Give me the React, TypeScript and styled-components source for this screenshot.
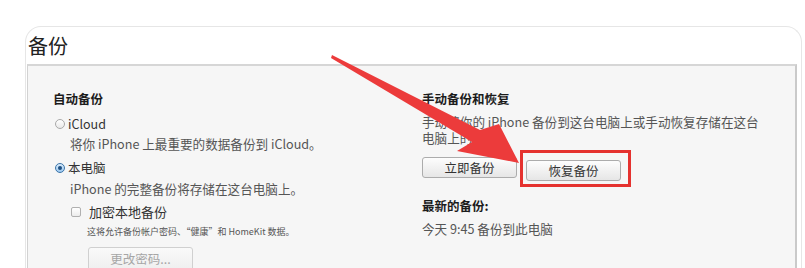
import styled, { createGlobalStyle, css } from 'styled-components';

const GlobalStyle = createGlobalStyle`
  html, body {
    margin: 0;
    padding: 0;
    background: #fff;
  }
  body {
    font-family: "Noto Sans CJK SC", "Noto Sans", sans-serif;
    color: #333;
  }
`;

const Page = styled.div`
  position: relative;
  width: 805px;
  height: 268px;
  overflow: hidden;
  padding: 26px 3px 0 25px;
  box-sizing: border-box;
`;

const Card = styled.section`
  border: 1px solid #e6e6e6;
  border-bottom: none;
  border-radius: 16px 16px 0 0;
  padding-top: 6px;
  min-height: 320px;
  background: #fff;
`;

const Title = styled.h1`
  margin: 0 0 5px 2px;
  font-size: 20px;
  line-height: 26px;
  font-weight: 400;
  color: #222;
`;

const Panel = styled.div`
  margin: 0 4px 0 1px;
  min-height: 260px;
  background: #f6f6f6;
  border-top: 2px solid #d6d6d6;
  border-left: 1px solid #d2d2d2;
  border-right: 2px solid #cacaca;
  display: grid;
  grid-template-columns: 369px 1fr;
  padding: 25px 0 0 25px;
`;

const Column = styled.div`
  display: flex;
  flex-direction: column;
  align-items: flex-start;
`;

const Heading = styled.div<{ $mt?: number }>`
  font-size: 12.5px;
  line-height: 16px;
  font-weight: 700;
  color: #1c1c1c;
  margin-top: ${({ $mt }) => $mt ?? 0}px;
`;

const Text = styled.div<{ $mt: number; $indent?: number }>`
  font-size: 12.6px;
  line-height: 16px;
  color: #555;
  margin-top: ${({ $mt }) => $mt}px;
  padding-left: ${({ $indent }) => $indent ?? 0}px;
  white-space: nowrap;
`;

const Note = styled.div`
  font-size: 9px;
  line-height: 12px;
  color: #555;
  margin-top: 6px;
  padding-left: 34px;
  white-space: nowrap;
`;

const OptionRow = styled.label<{ $mt: number; $indent?: number; $gap: number; $size?: number }>`
  display: flex;
  align-items: center;
  gap: ${({ $gap }) => $gap}px;
  margin-top: ${({ $mt }) => $mt}px;
  padding-left: ${({ $indent }) => $indent ?? 0}px;
  font-size: ${({ $size }) => $size ?? 12.5}px;
  line-height: 16px;
  color: #333;
`;

const Radio = styled.span<{ $checked?: boolean }>`
  width: 10px;
  height: 10px;
  border-radius: 50%;
  box-sizing: border-box;
  border: 1px solid #a9a9a9;
  background: linear-gradient(#fff, #e9e9e9);
  display: flex;
  align-items: center;
  justify-content: center;
  ${({ $checked }) =>
    $checked &&
    css`
      border-color: #3a74a8;
      background: linear-gradient(#d8ebfb, #9cc8ef);
      &::after {
        content: '';
        width: 4px;
        height: 4px;
        border-radius: 50%;
        background: #1e4f80;
      }
    `}
`;

const Checkbox = styled.span`
  width: 10px;
  height: 10px;
  box-sizing: border-box;
  border: 1px solid #b0b0b0;
  border-radius: 2px;
  background: linear-gradient(#fff, #ececec);
`;

const Button = styled.button<{ $disabled?: boolean }>`
  width: 95px;
  height: 21px;
  padding: 0;
  box-sizing: border-box;
  border: 1px solid #acacac;
  border-radius: 3px;
  background: linear-gradient(#fdfdfd, #e6e6e6);
  font-family: "Noto Sans CJK SC", "Noto Sans", sans-serif;
  font-size: 12.5px;
  line-height: 19px;
  color: ${({ $disabled }) => ($disabled ? '#a6a6a6' : '#333')};
  ${({ $disabled }) =>
    $disabled &&
    css`
      width: 105px;
      height: 24px;
      border-color: #d0d0d0;
      background: linear-gradient(#fafafa, #efefef);
    `}
`;

const ButtonRow = styled.div`
  display: flex;
  gap: 9px;
  margin-top: 11px;
`;

const Highlight = styled.div`
  position: relative;
  &::after {
    content: '';
    position: absolute;
    top: -7px;
    right: -10px;
    bottom: -6px;
    left: -6px;
    border: 3px solid #e5322f;
    pointer-events: none;
  }
`;

const ArrowLayer = styled.svg`
  position: absolute;
  left: 0;
  top: 0;
  pointer-events: none;
`;

const ButtonSlot = styled.div`
  margin-top: 7px;
  padding-left: 35px;
`;

export default function App() {
  return (
    <>
      <GlobalStyle />
      <Page>
        <Card>
          <Title>备份</Title>
          <Panel>
            <Column>
              <Heading>自动备份</Heading>
              <OptionRow $mt={9} $indent={2} $gap={3}>
                <Radio />
                iCloud
              </OptionRow>
              <Text $mt={4} $indent={17}>
                将你 iPhone 上最重要的数据备份到 iCloud。
              </Text>
              <OptionRow $mt={8} $indent={2} $gap={3}>
                <Radio $checked />
                本电脑
              </OptionRow>
              <Text $mt={5} $indent={17}>
                iPhone 的完整备份将存储在这台电脑上。
              </Text>
              <OptionRow $mt={7} $indent={18} $gap={8} $size={13}>
                <Checkbox />
                加密本地备份
              </OptionRow>
              <Note>这将允许备份帐户密码、“健康”和 HomeKit 数据。</Note>
              <ButtonSlot>
                <Button $disabled>更改密码...</Button>
              </ButtonSlot>
            </Column>
            <Column>
              <Heading>手动备份和恢复</Heading>
              <Text $mt={7}>
                手动将你的 iPhone 备份到这台电脑上或手动恢复存储在这台
                <br />
                电脑上的备份。
              </Text>
              <ButtonRow>
                <Button>立即备份</Button>
                <Highlight>
                  <Button>恢复备份</Button>
                </Highlight>
              </ButtonRow>
              <Heading $mt={17}>最新的备份:</Heading>
              <Text $mt={7}>今天 9:45 备份到此电脑</Text>
            </Column>
          </Panel>
        </Card>
        <ArrowLayer width="805" height="268" viewBox="0 0 805 268">
          <polygon
            points="332,55 480,130 499,124 519,163 457,151 472,142 331,58"
            fill="#ec3b3b"
          />
        </ArrowLayer>
      </Page>
    </>
  );
}
